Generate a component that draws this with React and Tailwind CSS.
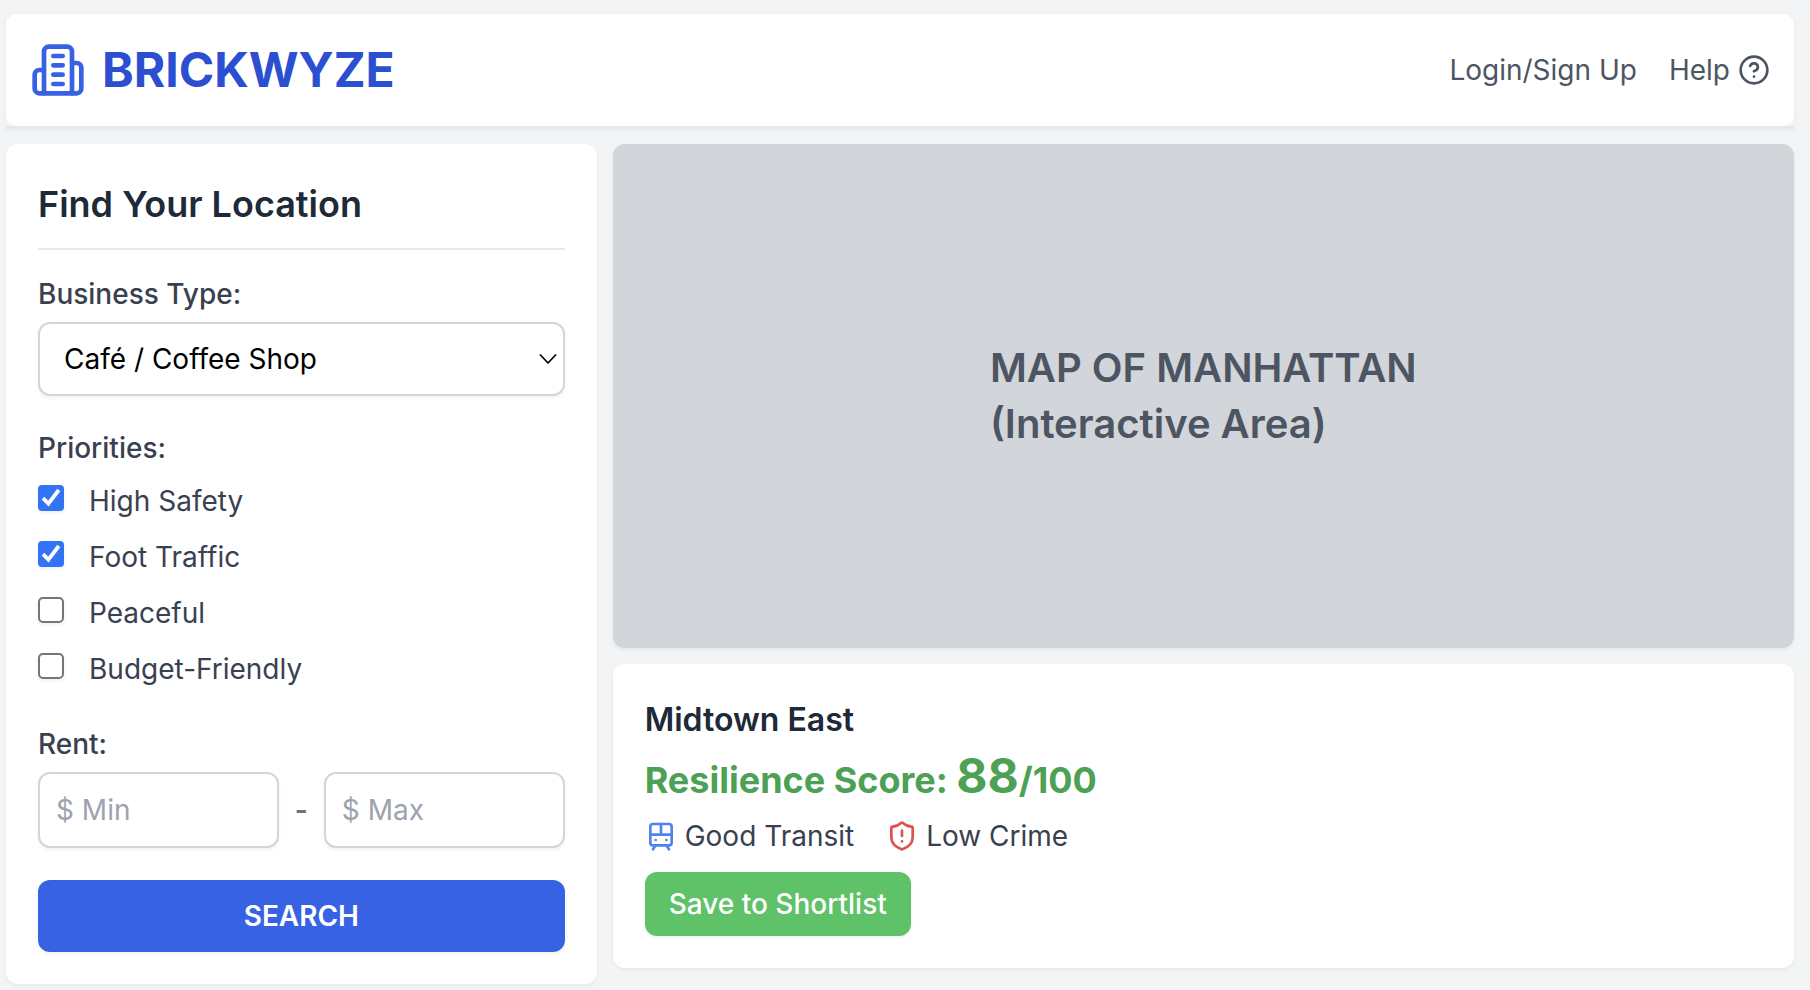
import { CircleHelp, ShieldAlert, TramFront } from "lucide-react";

const priorities = [
  { id: "safety", label: "High Safety", checked: true },
  { id: "traffic", label: "Foot Traffic", checked: true },
  { id: "peaceful", label: "Peaceful", checked: false },
  { id: "budget", label: "Budget-Friendly", checked: false },
];

function BuildingIcon() {
  return (
    <svg
      aria-hidden="true"
      viewBox="0 0 24 24"
      className="size-14 text-[#3762e3]"
      fill="none"
      stroke="currentColor"
      strokeWidth="2"
      strokeLinecap="round"
      strokeLinejoin="round"
    >
      <path d="M6 22V4a2 2 0 0 1 2-2h8a2 2 0 0 1 2 2v18Z" />
      <path d="M6 12H4a2 2 0 0 0-2 2v6a2 2 0 0 0 2 2h2" />
      <path d="M18 9h2a2 2 0 0 1 2 2v9a2 2 0 0 1-2 2h-2" />
      <path d="M10 6h4" />
      <path d="M10 10h4" />
      <path d="M10 14h4" />
      <path d="M10 18h4" />
    </svg>
  );
}

function Header() {
  return (
    <div className="border-b-2 border-[#e5e7eb] shadow-[0_2px_4px_rgba(0,0,0,0.05)]">
      <header className="flex items-center justify-between rounded-xl bg-white p-6">
        <div className="flex items-center gap-4">
          <BuildingIcon />
          <h1 className="text-5xl leading-[64px] font-bold text-[#2b4fd0]">BRICKWYZE</h1>
        </div>
        <nav className="flex items-center gap-8 text-[28px] leading-10 text-[#4d5562]">
          <a href="#login">Login/Sign Up</a>
          <a href="#help" className="flex items-center gap-2">
            Help
            <CircleHelp aria-hidden="true" className="size-8" />
          </a>
        </nav>
      </header>
    </div>
  );
}

function PriorityRow({ id, label, checked }) {
  return (
    <div className="flex h-12 items-start gap-[25px] pt-[9px]">
      <span className="grid size-[26px] shrink-0">
        <input
          id={id}
          type="checkbox"
          defaultChecked={checked}
          className="peer col-start-1 row-start-1 size-[26px] appearance-none rounded-[5px] border-2 border-[#767676] bg-white shadow-[0_2px_4px_rgba(0,0,0,0.06)] checked:rounded checked:border-[#3374f6] checked:bg-[#3374f6]"
        />
        <svg
          aria-hidden="true"
          viewBox="0 0 26 26"
          className="pointer-events-none invisible col-start-1 row-start-1 size-[26px] text-white peer-checked:visible"
          fill="none"
          stroke="currentColor"
          strokeWidth="3.8"
        >
          <path d="M5 13.2 10.4 18.600 20.8 5" />
        </svg>
      </span>
      <label htmlFor={id} className="leading-8">
        {label}
      </label>
    </div>
  );
}

const fieldClass =
  "rounded-xl border-2 border-[#d2d5da] bg-white shadow-[0_2px_4px_rgba(0,0,0,0.05)]";

function SearchPanel() {
  return (
    <form className="flex flex-col rounded-xl bg-white p-8 text-[28px] leading-10 text-[#394150] shadow-[0_2px_4px_rgba(0,0,0,0.05)]">
      <h2 className="border-b-2 border-[#e5e7eb] pb-4 text-4xl leading-[56px] font-semibold text-[#202937]">
        Find Your Location
      </h2>

      <label htmlFor="business" className="mt-6 font-medium">
        Business Type:
      </label>
      <div className="mt-2 grid items-center">
        <select
          id="business"
          className={`${fieldClass} col-start-1 row-start-1 h-[74px] w-full appearance-none px-6 text-black`}
        >
          <option>Café / Coffee Shop</option>
        </select>
        <svg
          aria-hidden="true"
          viewBox="0 0 18 10"
          className="pointer-events-none col-start-1 row-start-1 mr-2 h-[10px] w-[18px] justify-self-end text-black"
          fill="none"
          stroke="currentColor"
          strokeWidth="1.7"
          strokeLinecap="round"
          strokeLinejoin="round"
        >
          <path d="M1.4 1 9 9 16.600 1" />
        </svg>
      </div>

      <fieldset className="mt-8">
        <legend className="font-medium">Priorities:</legend>
        <div className="mt-2 flex flex-col gap-2">
          {priorities.map((p) => (
            <PriorityRow key={p.id} {...p} />
          ))}
        </div>
      </fieldset>

      <fieldset className="mt-8">
        <legend className="font-medium">Rent:</legend>
        <div className="mt-2 flex items-center gap-4">
          <input
            type="text"
            aria-label="Minimum rent"
            placeholder="$ Min"
            className={`${fieldClass} h-[76px] w-0 grow px-4 placeholder:text-[#9da3ae]`}
          />
          <span className="font-semibold text-[#6c727f]">-</span>
          <input
            type="text"
            aria-label="Maximum rent"
            placeholder="$ Max"
            className={`${fieldClass} h-[76px] w-0 grow px-4 placeholder:text-[#9da3ae]`}
          />
        </div>
      </fieldset>

      <button
        type="button"
        className="mt-8 rounded-xl bg-[#3762e3] px-8 py-4 font-semibold text-white shadow-[0_2px_4px_rgba(0,0,0,0.05)]"
      >
        SEARCH
      </button>
    </form>
  );
}

function LocationCard() {
  return (
    <section className="rounded-xl bg-white p-8 text-[28px] leading-10 text-[#394150] shadow-[0_2px_4px_rgba(0,0,0,0.05)]">
      <h3 className="text-[32px] leading-[48px] font-semibold text-[#202937]">Midtown East</h3>
      <p className="text-4xl leading-[56px] font-bold text-[#4ca154]">
        Resilience Score: <span className="text-5xl leading-[64px]">88</span>/100
      </p>
      <div className="mt-2 flex items-center gap-8">
        <span className="flex items-center gap-2">
          <TramFront aria-hidden="true" className="size-8 text-[#5182ef]" />
          Good Transit
        </span>
        <span className="flex items-center gap-2">
          <ShieldAlert aria-hidden="true" className="size-8 text-[#de524c]" />
          Low Crime
        </span>
      </div>
      <button
        type="button"
        className="mt-4 block rounded-xl bg-[#5fc269] px-6 py-3 font-medium text-white shadow-[0_2px_4px_rgba(0,0,0,0.05)]"
      >
        Save to Shortlist
      </button>
    </section>
  );
}

export default function App() {
  return (
    <div className="min-h-screen bg-[#f3f4f6] pt-[14px] pr-4 pl-[6px] font-['Inter',sans-serif]">
      <Header />
      <main className="mt-4 grid grid-cols-[1fr_2fr] items-start gap-4">
        <SearchPanel />
        <div className="flex flex-col gap-4">
          <section className="flex h-[504px] items-center justify-center rounded-xl bg-[#d2d5da] shadow-[0_2px_4px_rgba(0,0,0,0.06)]">
            <p className="text-[40px] leading-[56px] font-semibold text-[#4d5562]">
              MAP OF MANHATTAN
              <br />
              (Interactive Area)
            </p>
          </section>
          <LocationCard />
        </div>
      </main>
    </div>
  );
}
